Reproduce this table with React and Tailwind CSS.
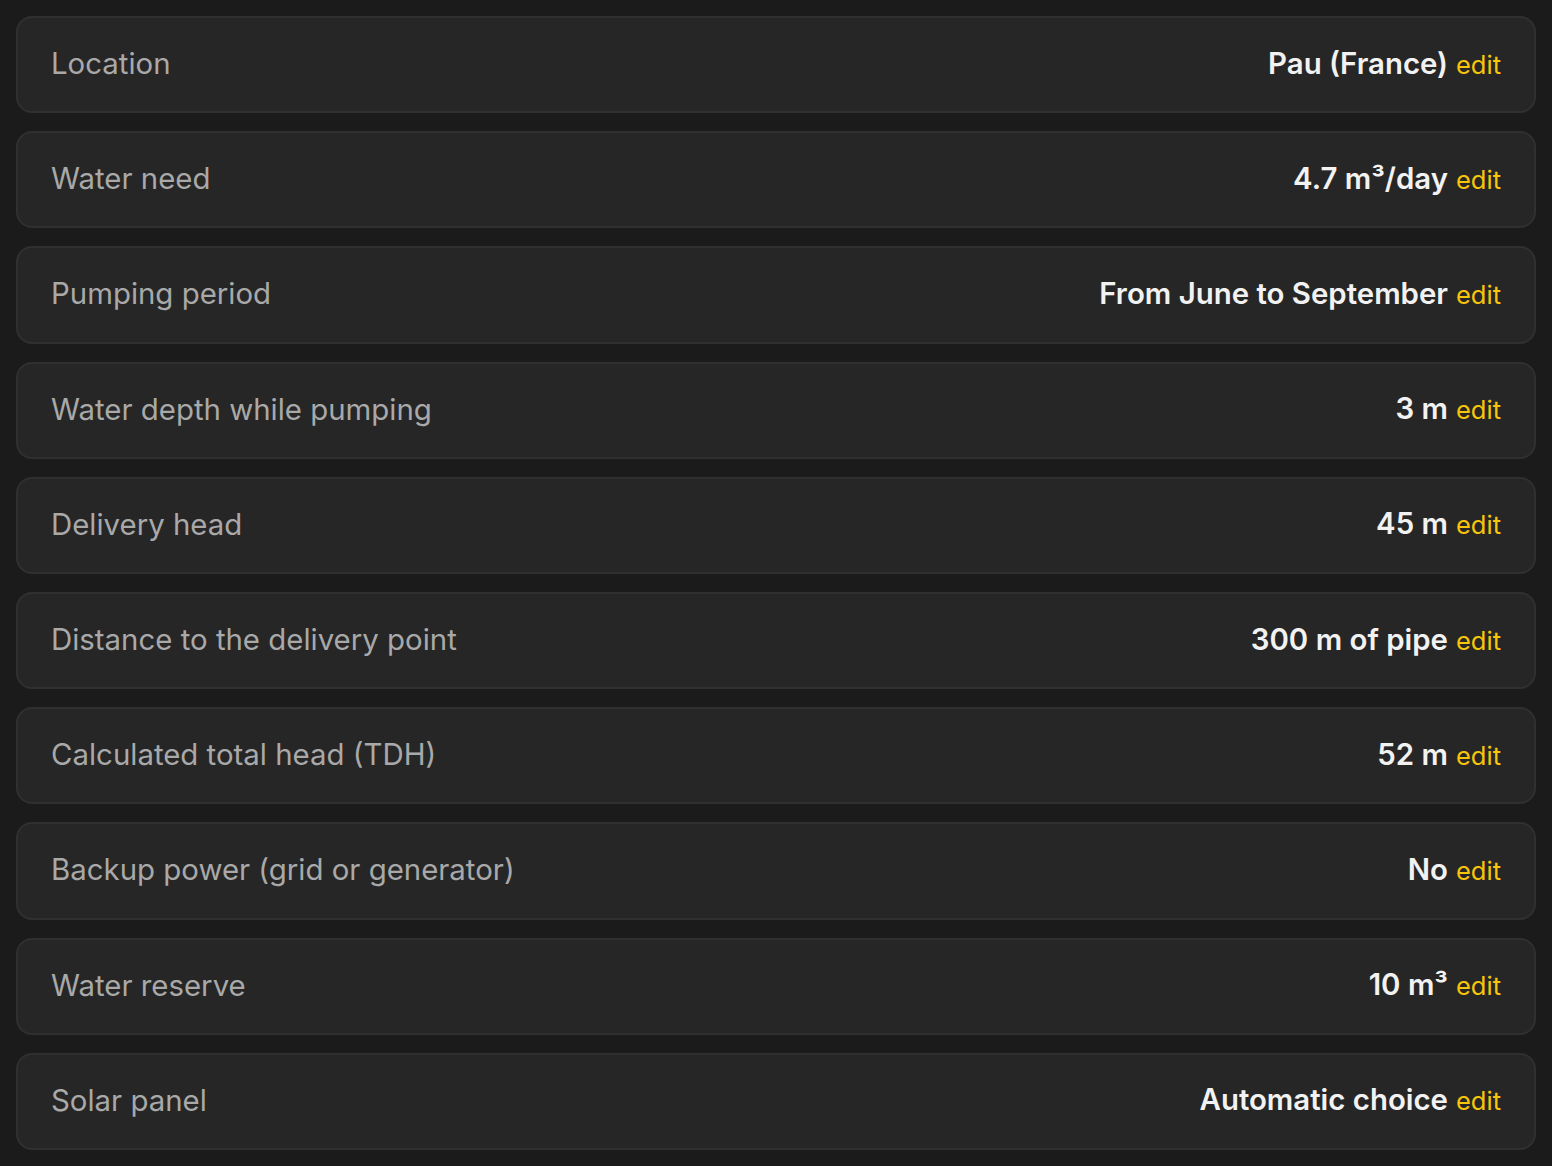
import React from "react";

const rows = [
  ["Location", "Pau (France)"],
  ["Water need", "4.7 m³/day"],
  ["Pumping period", "From June to September"],
  ["Water depth while pumping", "3 m"],
  ["Delivery head", "45 m"],
  ["Distance to the delivery point", "300 m of pipe"],
  ["Calculated total head (TDH)", "52 m"],
  ["Backup power (grid or generator)", "No"],
  ["Water reserve", "10 m³"],
  ["Solar panel", "Automatic choice"],
];

export default function App() {
  return (
    <div
      className="min-h-[1166px] bg-[#1b1b1b] p-4 flex flex-col gap-[18px]"
      style={{ fontFamily: "Inter, 'Noto Sans', sans-serif" }}
    >
      {rows.map(([label, value]) => (
        <div
          key={label}
          className="h-[97.2px] flex items-center justify-between rounded-[16px] border-2 border-[#303030] bg-[#262626] pl-[33px] pr-[33px]"
        >
          <span className="text-[29.4px] leading-[36px] -mt-[1px] text-[#a9a9a9]">{label}</span>
          <span className="flex items-baseline gap-[8px] -mt-[1px]">
            <span className="text-[29.4px] leading-[36px] font-semibold text-[#f2f2f2]">{value}</span>
            <span className="text-[25.5px] leading-[36px] text-[#f7c50a]">edit</span>
          </span>
        </div>
      ))}
    </div>
  );
}
